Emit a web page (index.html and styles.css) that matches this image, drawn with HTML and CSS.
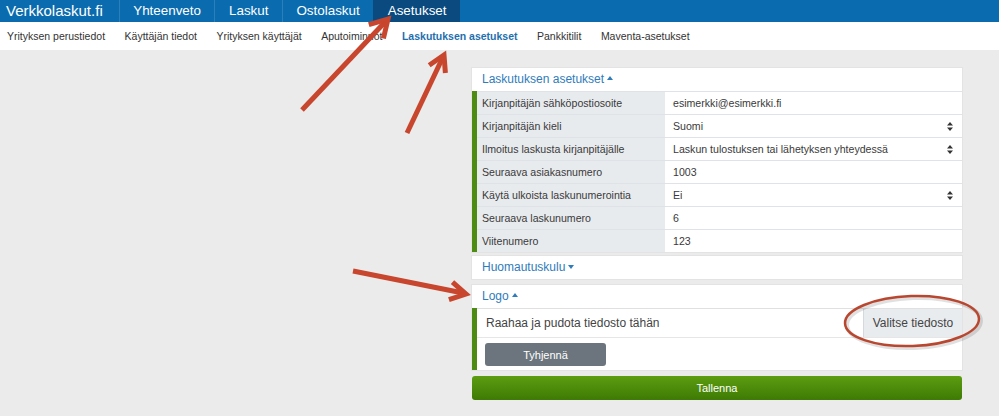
FILE: index.html
```html
<!DOCTYPE html>
<html>
	<head>
		<meta charset="UTF-8">
		<title>Laskutuksen asetukset</title>
		<link rel="stylesheet" href="styles.css">
	</head>
	<body>
		<header class="topbar">
			<a class="brand" href="#">Verkkolaskut.fi</a>
			<a href="#">Yhteenveto</a>
			<a href="#">Laskut</a>
			<a href="#">Ostolaskut</a>
			<a class="active" href="#">Asetukset</a>
		</header>
		<nav class="subnav">
			<a href="#">Yrityksen perustiedot</a>
			<a href="#">Käyttäjän tiedot</a>
			<a href="#">Yrityksen käyttäjät</a>
			<a href="#">Aputoiminnot</a>
			<a class="current" href="#">Laskutuksen asetukset</a>
			<a href="#">Pankkitilit</a>
			<a href="#">Maventa-asetukset</a>
		</nav>
		<main class="page">
			<div class="settings">
				<section class="panel">
					<h2 class="panel-title">Laskutuksen asetukset<span class="caret up"></span></h2>
					<div class="fields">
						<div class="row"><div class="label">Kirjanpitäjän sähköpostiosoite</div><div class="value">esimerkki@esimerkki.fi</div></div>
						<div class="row"><div class="label">Kirjanpitäjän kieli</div><div class="value select">Suomi<svg class="updown" width="6" height="9" viewBox="0 0 6 9"><path d="M3 0L6 3.5H0Z M3 9L6 5.5H0Z" fill="#333"/></svg></div></div>
						<div class="row"><div class="label">Ilmoitus laskusta kirjanpitäjälle</div><div class="value select">Laskun tulostuksen tai lähetyksen yhteydessä<svg class="updown" width="6" height="9" viewBox="0 0 6 9"><path d="M3 0L6 3.5H0Z M3 9L6 5.5H0Z" fill="#333"/></svg></div></div>
						<div class="row"><div class="label">Seuraava asiakasnumero</div><div class="value">1003</div></div>
						<div class="row"><div class="label">Käytä ulkoista laskunumerointia</div><div class="value select">Ei<svg class="updown" width="6" height="9" viewBox="0 0 6 9"><path d="M3 0L6 3.5H0Z M3 9L6 5.5H0Z" fill="#333"/></svg></div></div>
						<div class="row"><div class="label">Seuraava laskunumero</div><div class="value">6</div></div>
						<div class="row"><div class="label">Viitenumero</div><div class="value">123</div></div>
					</div>
				</section>
				<section class="panel gap-s">
					<h2 class="panel-title">Huomautuskulu<span class="caret down"></span></h2>
				</section>
				<section class="panel gap-m">
					<h2 class="panel-title">Logo<span class="caret up"></span></h2>
					<div class="logo-body">
						<div class="drop">
							<span class="drop-text">Raahaa ja pudota tiedosto tähän</span>
							<span class="pick">Valitse tiedosto</span>
						</div>
						<div class="logo-actions">
							<button class="btn-clear">Tyhjennä</button>
						</div>
					</div>
				</section>
				<button class="btn-save">Tallenna</button>
			</div>
		</main>

		<!-- merkinnät kuvakaappauksen päällä -->
		<svg class="marks" width="999" height="416" viewBox="0 0 999 416">
			<g stroke="#c8462d" stroke-width="5" fill="none">
				<line x1="302" y1="110" x2="386" y2="21"/>
				<polyline points="368.8,24.7 388,19 383.4,38.5"/>
				<line x1="407" y1="133" x2="443" y2="57"/>
				<polyline points="429.2,65.2 444,55 445.4,73"/>
				<line x1="353" y1="271" x2="463" y2="293"/>
				<polyline points="452.5,282.1 466,294 448.9,299.7"/>
			</g>
			<ellipse cx="914" cy="323" rx="67" ry="25" transform="rotate(-2 914 323)" fill="none" stroke="#000" stroke-opacity="0.12" stroke-width="4"/>
			<ellipse cx="912" cy="321" rx="67" ry="25" transform="rotate(-2 912 321)" fill="none" stroke="#b9472f" stroke-width="2.5"/>
		</svg>
	</body>
</html>
```

FILE: styles.css
```css
*{
	margin: 0;
	padding: 0;
	box-sizing: border-box;
}
body{
	width: 999px;
	height: 416px;
	overflow: hidden;
	position: relative;
	background: #ebebeb;
	font-family: "Liberation Sans", Arial, sans-serif;
	color: #333;
}
.topbar{
	display: flex;
	height: 22px;
	background: #0a6bae;
}
.topbar a{
	color: #fff;
	text-decoration: none;
	font-size: 13.4px;
	line-height: 22px;
	padding: 0 13.5px;
	border-left: 1px solid #2b7fbb;
}
.topbar .brand{
	font-size: 15px;
	padding: 0 16px 0 6px;
	border-left: 0;
}
.topbar .active{
	background: #0b4a7e;
	border-left-color: #0b4a7e;
}
.subnav{
	display: flex;
	align-items: center;
	gap: 19.5px;
	height: 28px;
	padding-left: 7px;
	background: #fff;
}
.subnav a{
	font-size: 10.5px;
	color: #333;
	text-decoration: none;
}
.subnav .current{
	font-weight: bold;
	color: #1f6fae;
}
.page{
	display: flex;
	justify-content: flex-end;
	padding: 18px 37px 0 0;
}
.settings{
	width: 490px;
	display: flex;
	flex-direction: column;
}
.panel{
	background: #fff;
	box-shadow: 0 0 0 1px #e3e3e3;
}
.gap-s{
	margin-top: 4px;
}
.gap-m{
	margin-top: 6px;
}
.panel-title{
	height: 23px;
	line-height: 23px;
	padding-left: 10px;
	font-size: 12px;
	font-weight: normal;
	color: #2f7cbb;
}
.caret{
	display: inline-block;
	margin-left: 3px;
	vertical-align: middle;
	border-left: 3.5px solid transparent;
	border-right: 3.5px solid transparent;
}
.caret.up{
	border-bottom: 4px solid #2f7cbb;
	margin-top: -3px;
}
.caret.down{
	border-top: 4px solid #2f7cbb;
	margin-top: -2px;
}
.fields{
	border-left: 5px solid #4e8b12;
}
.row{
	display: grid;
	grid-template-columns: 188px 1fr;
	height: 23px;
	border-top: 1px solid #dfe3e7;
	font-size: 10.6px;
	line-height: 22px;
}
.label{
	background: #e8ebee;
	padding-left: 5px;
	color: #3a3a3a;
}
.value{
	padding-left: 8px;
	color: #3a3a3a;
}
.value.select{
	display: flex;
	justify-content: space-between;
	align-items: center;
	padding-right: 9px;
}
.logo-body{
	border-left: 5px solid #4e8b12;
}
.drop{
	display: flex;
	justify-content: space-between;
	height: 29px;
	border-top: 1px solid #e0e0e0;
	font-size: 12px;
	line-height: 28px;
	color: #444;
}
.drop-text{
	padding-left: 9px;
}
.pick{
	width: 99px;
	text-align: center;
	background: #e9ecef;
	border-left: 1px solid #d5d9dd;
}
.logo-actions{
	height: 33px;
	padding: 5px 8px 0;
	border-top: 1px solid #e6e6e6;
}
.btn-clear{
	width: 121px;
	height: 23px;
	border: 0;
	border-radius: 3px;
	background: #6c757d;
	color: #fff;
	font-family: "Liberation Sans", Arial, sans-serif;
	font-size: 11px;
}
.btn-save{
	margin-top: 6px;
	height: 24px;
	border: 0;
	border-radius: 3px;
	background: linear-gradient(#5c9d10, #3e7a05);
	color: #fff;
	font-family: "Liberation Sans", Arial, sans-serif;
	font-size: 11px;
}
.marks{
	position: absolute;
	left: 0;
	top: 0;
	pointer-events: none;
}
```
